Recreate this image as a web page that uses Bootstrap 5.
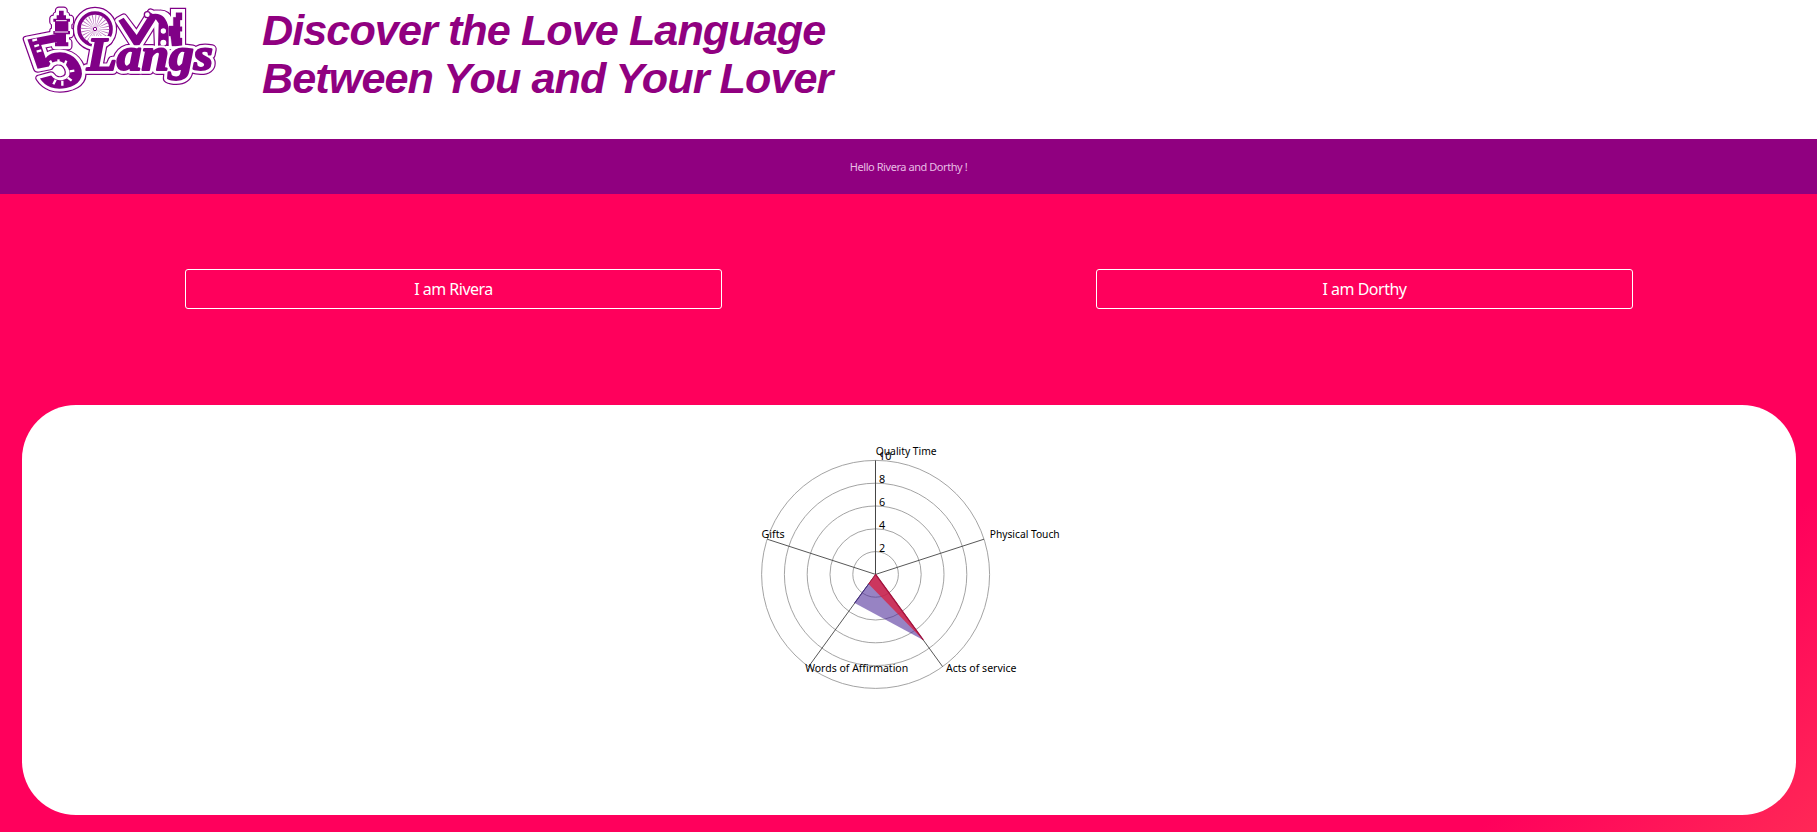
<!DOCTYPE html>
<html lang="en">
<head>
<meta charset="utf-8">
<meta name="viewport" content="width=device-width, initial-scale=1">
<title>5 Love Langs</title>
<link href="https://cdn.jsdelivr.net/npm/bootstrap@5.3.0/dist/css/bootstrap.min.css" rel="stylesheet">
<style>
body{font-family:"Noto Sans",sans-serif;overflow:hidden}
.site-head{height:139px;padding-left:20px}
.brand-art{width:200px;height:100px;flex:none}
.headline{font:italic bold 43.2px/48px "Liberation Sans",sans-serif;letter-spacing:-.95px;color:#900080;margin:6px 0 0 42px}
.greet{height:55px;padding-top:2px;background:#900080;color:#e8bde4;font-size:11px;letter-spacing:-.44px}
.stage{height:638px;padding:75px 21px 17px 22px;background:linear-gradient(135deg,#ff005c 86%,#ff2856 100%)}
.choices{padding:0 163px;margin-bottom:96px}
.btn-pick{width:537px;height:40px;padding:0;font-size:16px;line-height:38px;letter-spacing:-.5px;border-radius:3px}
.panel{height:410px;border-radius:54px}
</style>
</head>
<body>
<header class="site-head d-flex align-items-start bg-white">
<svg class="brand-art" viewBox="0 0 600 300" role="img" aria-label="5 Love Langs">
<defs>
<g id="art" stroke-linejoin="round">
<text x="22" y="260" transform="translate(117 182) rotate(-11) skewX(12) translate(-105 -178)" font-family="Liberation Sans" font-weight="bold" font-size="236" textLength="144" lengthAdjust="spacingAndGlyphs">5</text>
<path d="M117 32h14v14h7v10h12v9h-5v28h5v10h-12v24h7v12h-40v-12h6v-24h-11v-10h5v-28h-5v-9h10v-10h7z"/>
<path d="M295 62l16-9 39 52 42-67 20 12-54 86h-16z"/>
<path d="M396 42q40-8 50 42v54h-32l2-68z"/>
<path d="M482 38h4v22h-6v20h6v14h-6v20h6v24h-30l-4-30h-5v-30h13v-26h8v-14z" stroke="#800087" stroke-width="1"/>
</g>
<path id="rim" d="M410 42q36-8 40 32l12-10v-28h24v102h-72z"/>
<text id="script" x="200" y="210" stroke-linejoin="round" font-family="Liberation Serif" font-weight="bold" font-style="italic" font-size="140" textLength="379" lengthAdjust="spacingAndGlyphs">Langs</text>
</defs>
<g fill="#800087" stroke="#800087" stroke-width="25"><use href="#art"/><use href="#rim"/><circle cx="225" cy="87" r="54"/><g stroke-width="30"><use href="#script"/></g></g>
<g fill="#fff" stroke="#fff" stroke-width="18"><use href="#art"/><use href="#rim"/><circle cx="225" cy="87" r="54"/><g stroke-width="23"><use href="#script"/></g></g>
<path d="M456 35h30v103h-30l-4-30h-8v-40h12z" fill="#fff"/>
<g fill="#800087"><use href="#art"/></g>
<circle cx="225" cy="87" r="48" fill="#fff" stroke="#800087" stroke-width="11"/>
<circle cx="225" cy="87" r="24" fill="none" stroke="#b466b8" stroke-width="38" stroke-dasharray="1.7 4.58"/>
<circle cx="225" cy="87" r="5" fill="#fff" stroke="#800087" stroke-width="3"/>
<g fill="#fff" stroke="#800087" stroke-width="4"><circle cx="382" cy="44" r="9"/><circle cx="430" cy="93" r="10"/><circle cx="430" cy="128" r="11"/></g>
<path d="M37 122l14-4M43 139l14-4M50 155l14-4M90 182l7 12M115 178l2 15M139 182l-5 13M100 253l7-14M127 257v-15M155 242l-12-9M163 212l-14 2" stroke="#fff" stroke-width="7"/>
<path d="M108 62h32M104 96h40" stroke="#fff" stroke-width="3"/>
<g fill="#fff" stroke="#fff" stroke-width="18"><use href="#script"/></g>
<g fill="#800087" stroke="#800087" stroke-width="6"><use href="#script"/></g>
</svg>
<h1 class="headline">Discover the Love Language<br>Between You and Your Lover</h1>
</header>
<div class="greet d-flex align-items-center justify-content-center">Hello Rivera and Dorthy !</div>
<main class="stage">
<div class="choices d-flex justify-content-between">
<button class="btn btn-outline-light btn-pick text-white border-white" type="button">I am Rivera</button>
<button class="btn btn-outline-light btn-pick text-white border-white" type="button">I am Dorthy</button>
</div>
<section class="panel bg-white">
<svg class="d-block" width="1774" height="410" viewBox="22 405 1774 410" font-family="Noto Sans" font-size="10.8" fill="#000">
<g transform="translate(875.6 574.4)">
<g fill="none" stroke="#999" stroke-width=".9"><circle r="22.8"/><circle r="45.6"/><circle r="68.4"/><circle r="91.2"/><circle r="114"/></g>
<path d="M0 0L108.4-35.2M0 0L67 92.2M0 0L-67 92.2M0 0L-108.4-35.2" stroke="#444" stroke-width=".9"/>
<path d="M-.1 0V-114" stroke="#444"/>
<path d="M0 0L47.6 65.5L-21 28.5Z" fill="#4b2a98" fill-opacity=".58"/>
<path d="M0 0L47.6 65.5L-7 9.6Z" fill="#dc1c3c" fill-opacity=".75"/>
<path d="M0 0L47.6 65.5" stroke="#a8103c" stroke-width="1.3"/><path d="M0 0L-7 9.6" stroke="#b01840"/><path d="M-7 9.6L-21 28.5" stroke="#432b80"/>
</g>
<text x="875.7" y="455" textLength="61" lengthAdjust="spacingAndGlyphs">Quality Time</text>
<text x="989.7" y="538" textLength="70" lengthAdjust="spacingAndGlyphs">Physical Touch</text>
<text x="946" y="672" textLength="70.5" lengthAdjust="spacingAndGlyphs">Acts of service</text>
<text x="805.2" y="672" textLength="103" lengthAdjust="spacingAndGlyphs">Words of Affirmation</text>
<text x="761.5" y="538" textLength="23.2" lengthAdjust="spacingAndGlyphs">Gifts</text>
<text x="879" y="460">10</text><text x="879" y="483">8</text><text x="879" y="506">6</text><text x="879" y="529">4</text><text x="879" y="552">2</text>
</svg>
</section>
</main>
<script src="https://cdn.jsdelivr.net/npm/bootstrap@5.3.0/dist/js/bootstrap.bundle.min.js"></script>
</body>
</html>
